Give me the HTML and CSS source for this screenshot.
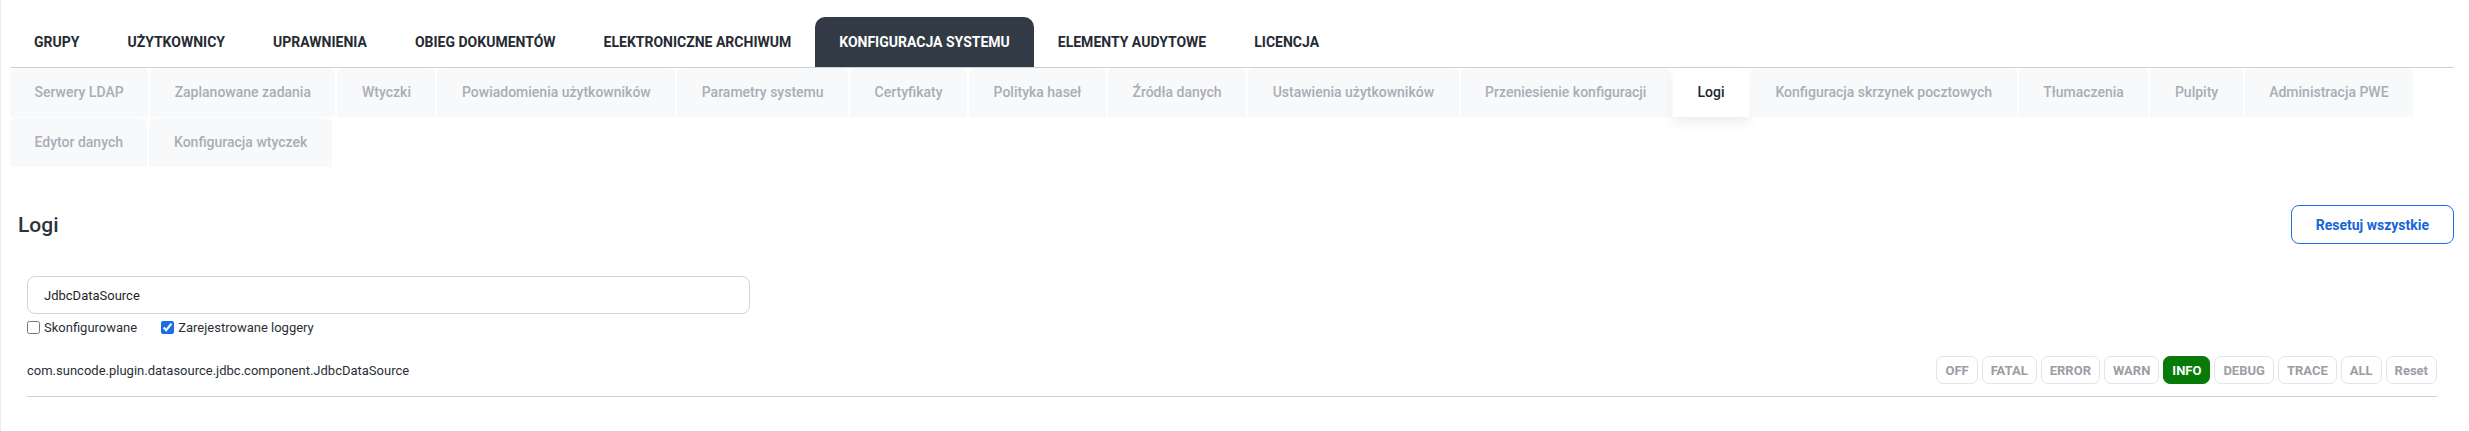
FILE: index.html
```html
<!DOCTYPE html>
<html lang="pl">
<head>
  <meta charset="UTF-8" />
  <meta name="viewport" content="width=device-width, initial-scale=1.0"/>
  <title>Konfiguracja systemu - Logi</title>
  <link rel="stylesheet" href="styles.css">
</head>
<body>
  <div class="page">
    <nav class="main-tabs">
      <a class="main-tab">Grupy</a>
      <a class="main-tab">Użytkownicy</a>
      <a class="main-tab">Uprawnienia</a>
      <a class="main-tab">Obieg dokumentów</a>
      <a class="main-tab">Elektroniczne archiwum</a>
      <a class="main-tab active">Konfiguracja systemu</a>
      <a class="main-tab">Elementy audytowe</a>
      <a class="main-tab">Licencja</a>
    </nav>

    <div class="sub-tabs">
      <a class="sub-tab">Serwery LDAP</a>
      <a class="sub-tab">Zaplanowane zadania</a>
      <a class="sub-tab">Wtyczki</a>
      <a class="sub-tab">Powiadomienia użytkowników</a>
      <a class="sub-tab">Parametry systemu</a>
      <a class="sub-tab">Certyfikaty</a>
      <a class="sub-tab">Polityka haseł</a>
      <a class="sub-tab">Źródła danych</a>
      <a class="sub-tab">Ustawienia użytkowników</a>
      <a class="sub-tab">Przeniesienie konfiguracji</a>
      <a class="sub-tab active">Logi</a>
      <a class="sub-tab">Konfiguracja skrzynek pocztowych</a>
      <a class="sub-tab">Tłumaczenia</a>
      <a class="sub-tab">Pulpity</a>
      <a class="sub-tab">Administracja PWE</a>
      <a class="sub-tab">Edytor danych</a>
      <a class="sub-tab">Konfiguracja wtyczek</a>
    </div>

    <section class="logs">
      <div class="logs-header">
        <h2>Logi</h2>
        <button class="btn-outline">Resetuj wszystkie</button>
      </div>

      <div class="logs-body">
        <input type="text" class="search" value="JdbcDataSource" />

        <div class="filters">
          <label class="check"><input type="checkbox" /> Skonfigurowane</label>
          <label class="check"><input type="checkbox" checked /> Zarejestrowane loggery</label>
        </div>

        <div class="logger-row">
          <span class="logger-name">com.suncode.plugin.datasource.jdbc.component.JdbcDataSource</span>
          <div class="levels">
            <button class="level">OFF</button>
            <button class="level">FATAL</button>
            <button class="level">ERROR</button>
            <button class="level">WARN</button>
            <button class="level active">INFO</button>
            <button class="level">DEBUG</button>
            <button class="level">TRACE</button>
            <button class="level">ALL</button>
            <button class="level">Reset</button>
          </div>
        </div>
      </div>
    </section>
  </div>
</body>
</html>
```

FILE: styles.css
```css
* {
  margin: 0;
  padding: 0;
  box-sizing: border-box;
  font-family: 'Roboto', 'Liberation Sans', sans-serif;
}

body {
  background: #fff;
  color: #2b3038;
}

.page {
  border-left: 1px solid #ececec;
  padding: 17px 15px 0 9px;
  min-height: 431px;
}

/* Main tabs */
.main-tabs {
  display: flex;
  border-bottom: 1px solid #cfd0d2;
}

.main-tab {
  height: 50px;
  line-height: 50px;
  padding: 0 24px;
  font-size: 14px;
  font-weight: 700;
  text-transform: uppercase;
  color: #262b33;
  border-radius: 10px 10px 0 0;
  cursor: pointer;
}

.main-tab.active {
  background: #323a45;
  color: #fff;
}

/* Sub tabs */
.sub-tabs {
  display: flex;
  flex-wrap: wrap;
  gap: 1px 2px;
}

.sub-tab {
  height: 49px;
  line-height: 49px;
  padding: 0 24.5px;
  font-size: 14px;
  font-weight: 500;
  color: #a9adb4;
  background: #f8f9fb;
  border-radius: 6px 6px 0 0;
  cursor: pointer;
}

.sub-tab.active {
  background: #fff;
  color: #1e2631;
  box-shadow: 0 6px 12px rgba(0, 0, 0, 0.07);
}

/* Logs */
.logs-header {
  display: flex;
  justify-content: space-between;
  align-items: center;
  margin-top: 38px;
  padding-left: 8px;
}

.logs-header h2 {
  font-size: 21px;
  font-weight: 500;
  color: #2c333d;
}

.btn-outline {
  height: 39px;
  padding: 0 24px;
  background: #fff;
  border: 1px solid #1f6fe0;
  border-radius: 8px;
  color: #1565d8;
  font-size: 14px;
  font-weight: 700;
  cursor: pointer;
}

.logs-body {
  padding: 0 17px;
  margin-top: 32px;
}

.search {
  display: block;
  width: 723px;
  height: 38px;
  padding: 0 16px;
  border: 1px solid #d2d3d5;
  border-radius: 8px;
  font-size: 13px;
  color: #1f1f1f;
}

.filters {
  display: flex;
  align-items: center;
  gap: 24px;
  margin-top: 5px;
  height: 16px;
}

.check {
  display: flex;
  align-items: center;
  gap: 4px;
  font-size: 13px;
  color: #2b2f36;
}

.check input {
  width: 13px;
  height: 13px;
  margin: 0;
  accent-color: #1a6fe6;
}

.logger-row {
  display: flex;
  justify-content: space-between;
  align-items: center;
  margin-top: 21px;
  padding-bottom: 12px;
  border-bottom: 1px solid #cfd0d2;
}

.logger-name {
  font-size: 13px;
  color: #2b2f36;
}

.levels {
  display: flex;
  gap: 4px;
}

.level {
  height: 28px;
  padding: 0 8px;
  background: #fff;
  border: 1px solid #e3e4e6;
  border-radius: 7px;
  font-size: 13px;
  font-weight: 700;
  color: #9a9ea5;
  cursor: pointer;
}

.level.active {
  background: #087a08;
  border-color: #087a08;
  color: #fff;
}
```
